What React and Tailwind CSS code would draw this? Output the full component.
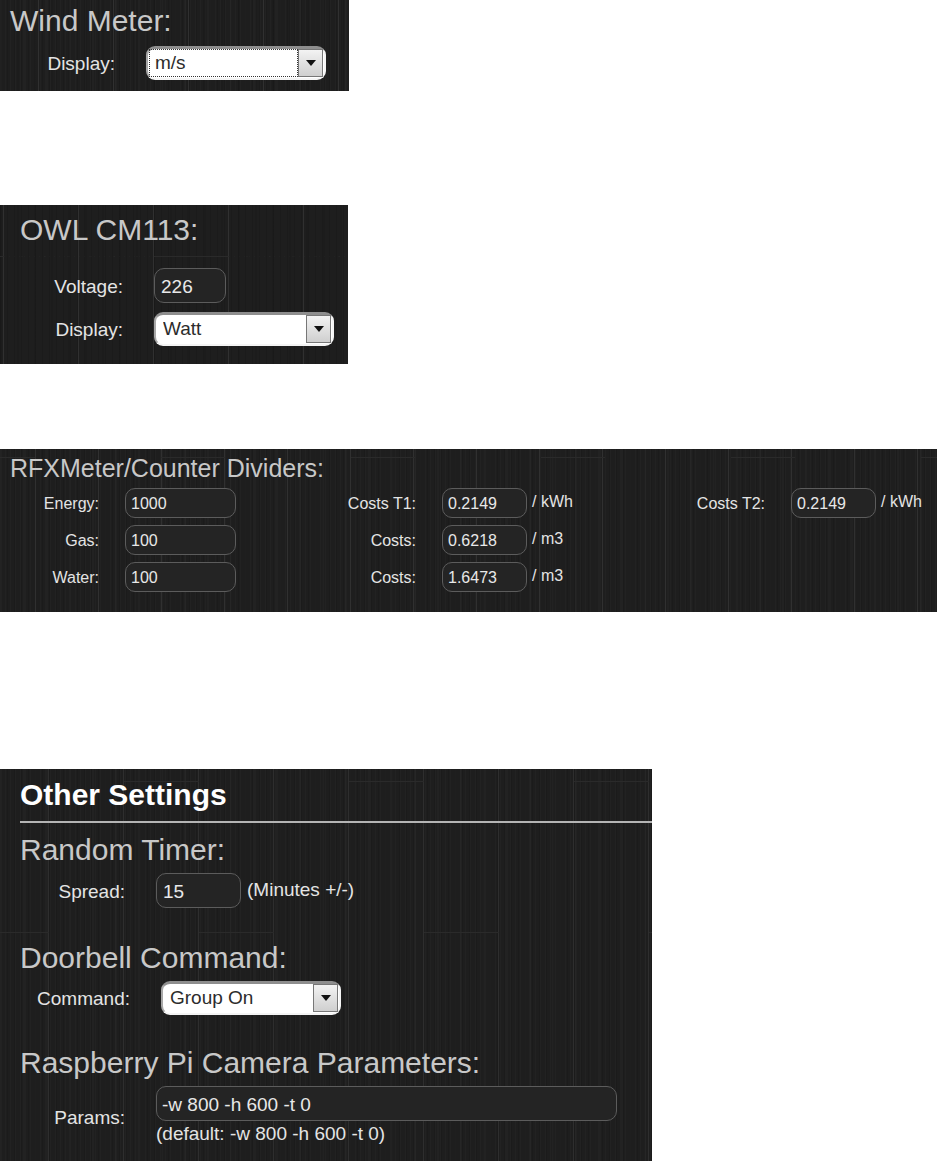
import React, { useId } from "react";

const grain =
  "[--grain:repeating-linear-gradient(90deg,#ffffff05_0_1px,transparent_1px_5px),repeating-linear-gradient(90deg,#0000001a_0_1px,transparent_1px_7px),repeating-linear-gradient(90deg,#ffffff05_0_2px,transparent_2px_23px),repeating-linear-gradient(90deg,#00000014_0_2px,transparent_2px_17px)]";

function Panel({ className, children }) {
  return (
    <section className={`bg-[#1e1e1e] text-[#e4e4e4] ${grain} ${className}`}>
      {children}
    </section>
  );
}

function Heading({ children }) {
  return <h2 className="text-[30px] leading-9 text-[#c8c8c8]">{children}</h2>;
}

function Field({ id, label, labelClass, children }) {
  return (
    <div className="flex items-center">
      <label
        htmlFor={id}
        className={`mr-[31px] shrink-0 pt-0.5 text-right text-[19px] leading-6 ${labelClass}`}
      >
        {label}
      </label>
      {children}
    </div>
  );
}

function Select({ id, value, options, focused }) {
  return (
    <div className="relative w-[180px]">
      <select
        id={id}
        defaultValue={value}
        className="block h-[34px] w-full appearance-none rounded-[9px] border-2 border-t-[3px] border-[#f4f4f4] border-t-[#8e8e8e] border-l-[#a8a8a8] bg-white pb-0.5 pl-[7px] text-[19px] leading-6 text-[#2c2c2c] outline-none"
      >
        {options.map((o) => (
          <option key={o}>{o}</option>
        ))}
      </select>
      {focused && (
        <span className="pointer-events-none absolute top-[3px] right-[28px] bottom-[3px] left-[3px] border border-dotted border-[#333]" />
      )}
      <span className="pointer-events-none absolute top-[3px] right-[3px] bottom-[3px] flex w-[25px] items-center justify-center border border-[#777] bg-linear-to-b from-[#f3f3f3] to-[#cfcfcf]">
        <svg width="10" height="6" viewBox="0 0 10 6" aria-hidden="true">
          <path d="M0 0h10L5 6z" fill="#111" />
        </svg>
      </span>
    </div>
  );
}

function TextBox({ id, value, className }) {
  return (
    <input
      id={id}
      type="text"
      defaultValue={value}
      className={`block min-w-0 rounded-[10px] border border-[#5c5c5c] bg-[#242424] pt-0.5 text-[#e8e8e8] outline-none ${className}`}
    />
  );
}

function Meter({ label, value, unit, wide }) {
  const id = useId();
  return (
    <div className="flex items-center">
      <label htmlFor={id} className="mr-[26px] w-[99px] shrink-0 pt-0.5 text-right text-base">
        {label}
      </label>
      <TextBox
        id={id}
        value={value}
        className={`h-[30px] shrink-0 px-[5px] text-base ${wide ? "w-[111px]" : "w-[85px]"}`}
      />
      {unit && <span className="ml-[5px] pb-0.5 text-base whitespace-nowrap">{unit}</span>}
    </div>
  );
}

export default function App() {
  return (
    <main className="font-['Liberation_Sans',Arial,sans-serif]">
      <Panel className="max-w-[349px] pt-[3px] pb-[11px] [background-image:repeating-linear-gradient(90deg,transparent_0_38px,#303030_38px_39px,transparent_39px_75px),var(--grain)]">
        <div className="pl-[10px]">
          <Heading>Wind Meter:</Heading>
        </div>
        <div className="mt-[7px]">
          <Field id="wind" label="Display:" labelClass="w-[115px]">
            <Select id="wind" value="m/s" options={["m/s", "km/h", "mph", "Knots"]} focused />
          </Field>
        </div>
      </Panel>

      <Panel className="mt-[114px] max-w-[348px] pt-[7px] pb-[18px] [background-image:linear-gradient(90deg,#2a2a2a_75px,transparent_75px),repeating-linear-gradient(90deg,transparent_0_3px,#303030_3px_4px,transparent_4px_75px),var(--grain)] [background-size:225px_1px,auto] [background-position:154px_51px,0_0] [background-repeat:repeat-x,repeat]">
        <div className="pl-5">
          <Heading>OWL CM113:</Heading>
        </div>
        <div className="mt-5 flex flex-col gap-[9px]">
          <Field id="voltage" label="Voltage:" labelClass="w-[123px]">
            <TextBox id="voltage" value="226" className="h-[35px] w-[72px] px-[6px] text-[19px]" />
          </Field>
          <Field id="owl" label="Display:" labelClass="w-[123px]">
            <Select id="owl" value="Watt" options={["Watt", "Ampere"]} />
          </Field>
        </div>
      </Panel>

      <Panel className="mt-[85px] pt-1 pb-5 [background-image:linear-gradient(90deg,#2a2a2a_64px,transparent_64px),linear-gradient(90deg,#303030_1px,transparent_1px),repeating-linear-gradient(90deg,#ffffff05_0_1px,transparent_1px_5px),repeating-linear-gradient(90deg,#0000001a_0_1px,transparent_1px_7px),repeating-linear-gradient(90deg,#ffffff05_0_2px,transparent_2px_23px)] [background-size:190px_1px,63px_100%,auto,auto,auto] [background-position:161px_8px,35px_0,0_0,0_0,0_0] [background-repeat:repeat-x,repeat-x,repeat,repeat,repeat]">
        <h2 className="pl-[10px] text-[25px] leading-[30px] text-[#c8c8c8]">
          RFXMeter/Counter Dividers:
        </h2>
        <div className="mt-[5px] grid grid-cols-[317fr_349fr_271fr] gap-y-[7px]">
          <Meter label="Energy:" value="1000" wide />
          <Meter label="Costs T1:" value="0.2149" unit="/ kWh" />
          <Meter label="Costs T2:" value="0.2149" unit="/ kWh" />
          <Meter label="Gas:" value="100" wide />
          <Meter label="Costs:" value="0.6218" unit="/ m3" />
          <span />
          <Meter label="Water:" value="100" wide />
          <Meter label="Costs:" value="1.6473" unit="/ m3" />
        </div>
      </Panel>

      <Panel className="mt-[157px] max-w-[652px] pt-2 pb-[14px] [background-image:linear-gradient(90deg,#2a2a2a_75px,transparent_75px),linear-gradient(90deg,#2a2a2a_75px,transparent_75px),linear-gradient(90deg,#2e2e2e_1px,transparent_1px),repeating-linear-gradient(90deg,#ffffff05_0_1px,transparent_1px_5px),repeating-linear-gradient(90deg,#0000001a_0_1px,transparent_1px_7px),repeating-linear-gradient(90deg,#ffffff05_0_2px,transparent_2px_23px)] [background-size:225px_1px,225px_1px,75px_100%,auto,auto,auto] [background-position:124px_12px,199px_163px,48px_0,0_0,0_0,0_0] [background-repeat:repeat-x,repeat-x,repeat-x,repeat,repeat,repeat]">
        <h1 className="ml-5 border-b-2 border-[#b4b4b4] pb-2 text-[30px] leading-9 font-bold text-white">
          Other Settings
        </h1>
        <div className="mt-[9px] pl-5">
          <Heading>Random Timer:</Heading>
        </div>
        <div className="mt-[5px]">
          <Field id="spread" label="Spread:" labelClass="w-[125px]">
            <div className="flex items-center gap-[6px]">
              <TextBox id="spread" value="15" className="h-[35px] w-[85px] px-[6px] text-[19px]" />
              <span className="pb-0.5 text-[19px] leading-6 whitespace-nowrap">(Minutes +/-)</span>
            </div>
          </Field>
        </div>

        <div className="mt-8 pl-5">
          <Heading>Doorbell Command:</Heading>
        </div>
        <div className="mt-[5px]">
          <Field id="command" label="Command:" labelClass="w-[130px]">
            <Select id="command" value="Group On" options={["On", "Group On"]} />
          </Field>
        </div>

        <div className="mt-[30px] pl-5">
          <Heading>Raspberry Pi Camera Parameters:</Heading>
        </div>
        <div className="mt-[5px] pr-[35px]">
          <Field id="params" label="Params:" labelClass="w-[125px]">
            <div className="min-w-0 flex-1">
              <TextBox
                id="params"
                value="-w 800 -h 600 -t 0"
                className="h-[35px] w-full px-[5px] text-[19px]"
              />
              <p className="text-[19px] leading-[26px]">(default: -w 800 -h 600 -t 0)</p>
            </div>
          </Field>
        </div>
      </Panel>
    </main>
  );
}
